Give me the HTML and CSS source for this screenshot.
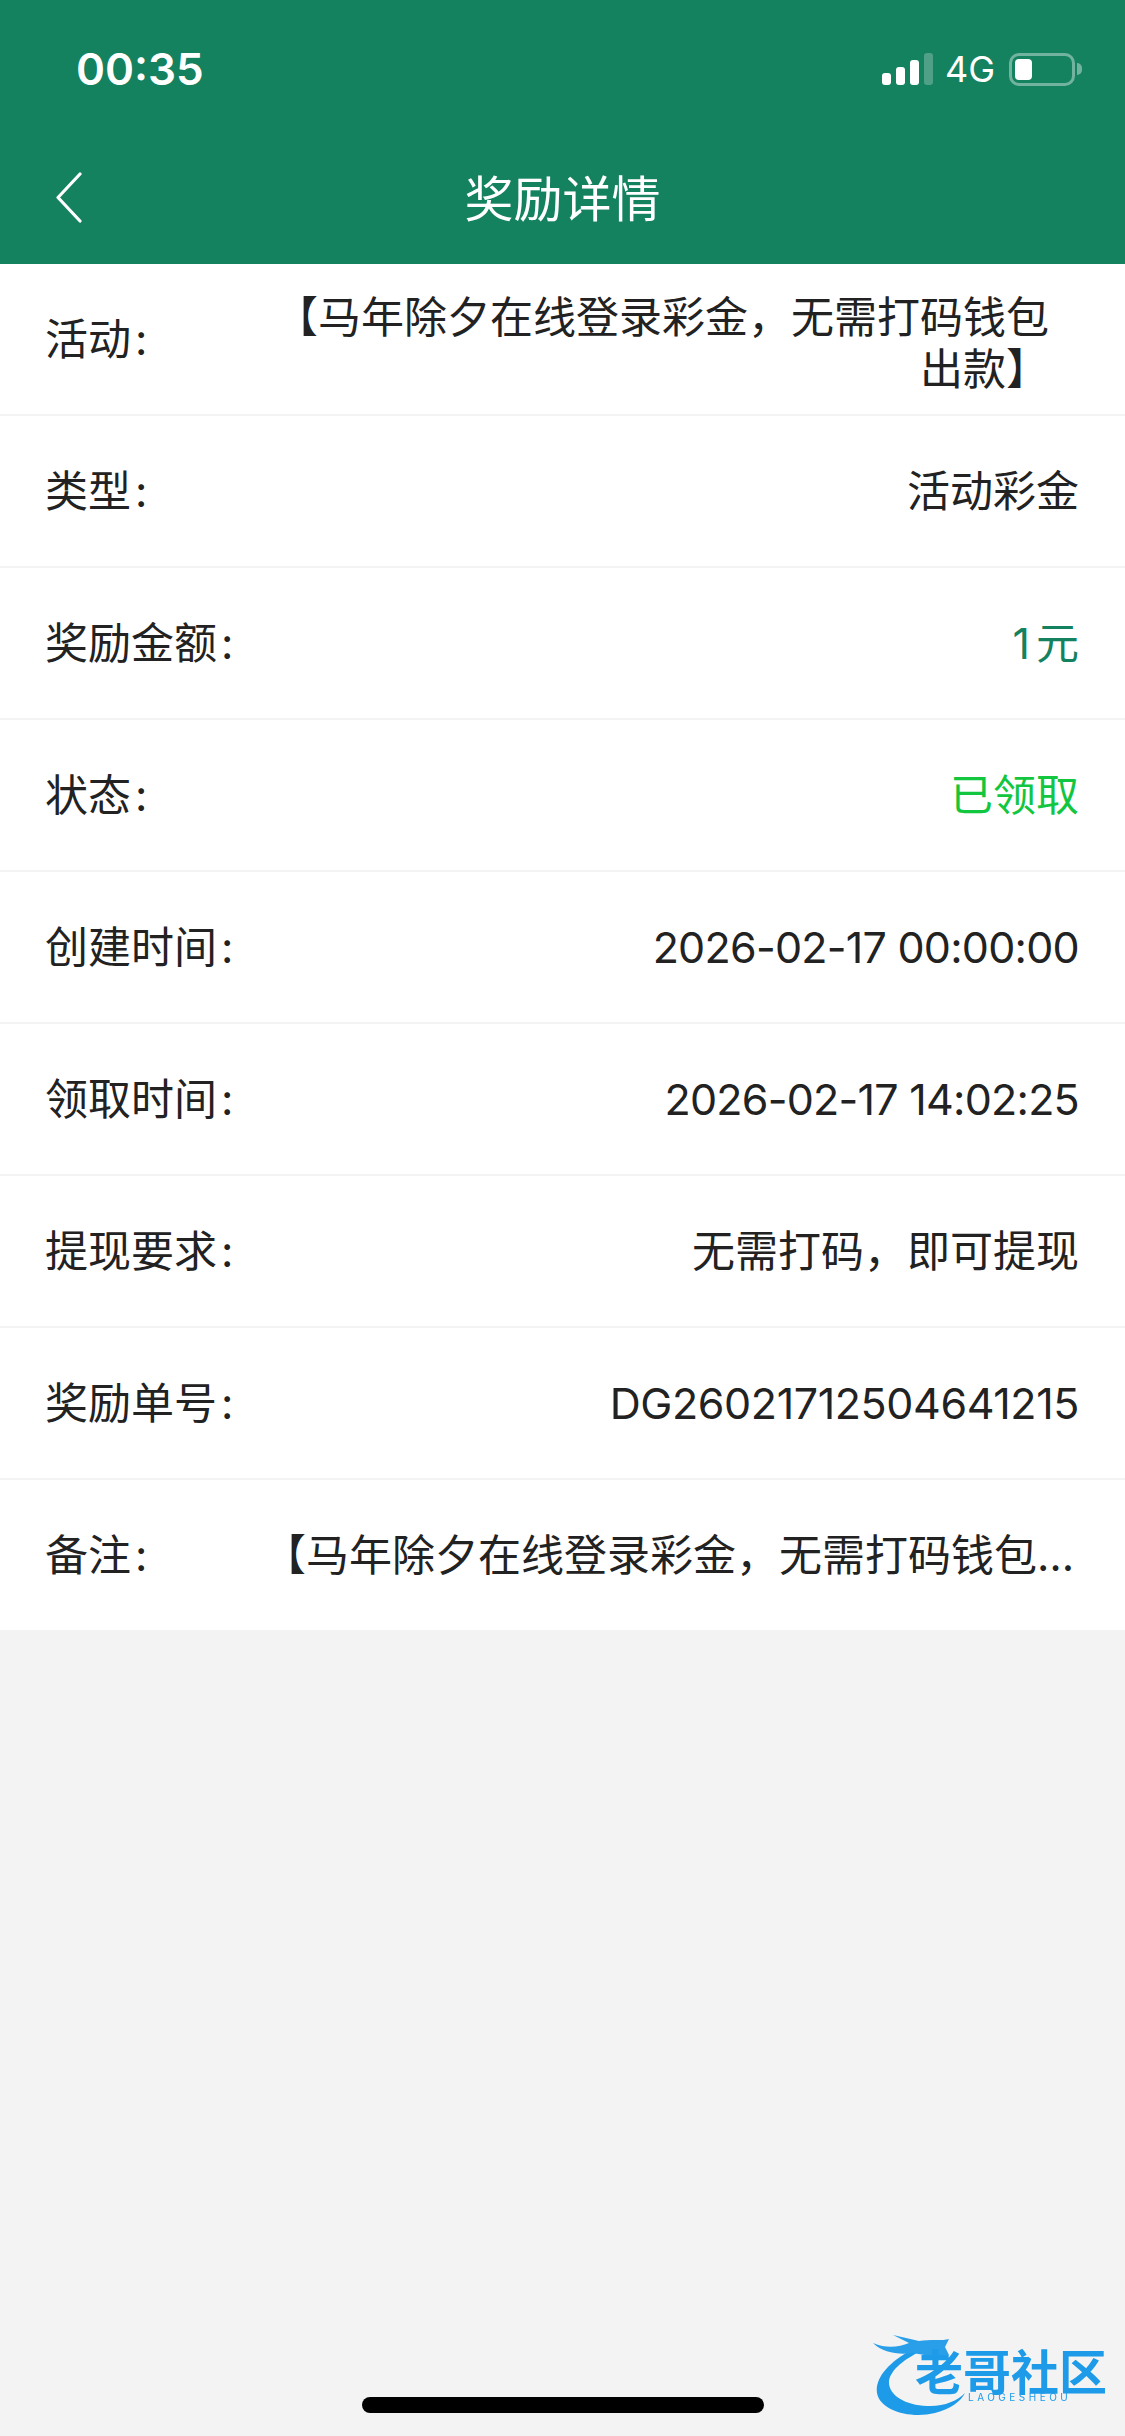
FILE: index.html
```html
<!DOCTYPE html>
<html lang="zh-CN">
<head>
  <meta charset="UTF-8" />
  <meta name="viewport" content="width=device-width, initial-scale=1.0"/>
  <title>奖励详情</title>
  <link rel="stylesheet" href="styles.css">
</head>
<body>
  <header class="header">
    <div class="status">
      <span class="time">00:35</span>
      <div class="status-right">
        <div class="signal">
          <i class="bar bar1"></i>
          <i class="bar bar2"></i>
          <i class="bar bar3"></i>
          <i class="bar bar4"></i>
        </div>
        <span class="net">4G</span>
        <div class="battery"><i class="battery-fill"></i></div>
        <i class="battery-nub"></i>
      </div>
    </div>
    <nav class="nav">
      <svg class="back" width="27" height="51" viewBox="0 0 27 51">
        <path d="M25 2 L3 25.500 L25 49" fill="none" stroke="#fff" stroke-width="3.200" stroke-linecap="round" stroke-linejoin="round"/>
      </svg>
      <h1 class="title">奖励详情</h1>
    </nav>
  </header>

  <section class="list">
    <div class="row">
      <span class="label">活动<b class="colon">:</b></span>
      <span class="value value-wrap">【马年除夕在线登录彩金，无需打码钱包出款】</span>
    </div>
    <div class="row">
      <span class="label">类型<b class="colon">:</b></span>
      <span class="value">活动彩金</span>
    </div>
    <div class="row">
      <span class="label">奖励金额<b class="colon">:</b></span>
      <span class="value amount"><span class="one">1</span>元</span>
    </div>
    <div class="row">
      <span class="label">状态<b class="colon">:</b></span>
      <span class="value done">已领取</span>
    </div>
    <div class="row">
      <span class="label">创建时间<b class="colon">:</b></span>
      <span class="value date">2026-02-17 00:00:00</span>
    </div>
    <div class="row">
      <span class="label">领取时间<b class="colon">:</b></span>
      <span class="value date">2026-02-17 14:02:25</span>
    </div>
    <div class="row">
      <span class="label">提现要求<b class="colon">:</b></span>
      <span class="value">无需打码，即可提现</span>
    </div>
    <div class="row">
      <span class="label">奖励单号<b class="colon">:</b></span>
      <span class="value order-no">DG26021712504641215</span>
    </div>
    <div class="row">
      <span class="label">备注<b class="colon">:</b></span>
      <span class="value value-cut">【马年除夕在线登录彩金，无需打码钱包出款】</span>
    </div>
  </section>

  <div class="watermark">
    <svg class="dragon" width="125" height="85" viewBox="0 0 125 85">
      <path d="M40 14 C14 28 2 44 4 58 C7 76 38 84 62 78 C78 74 88 66 92 58 C84 66 70 72 54 71 C32 70 15 60 16 46 C18 34 32 24 48 16 Z" fill="#1e9be8"/>
      <path d="M0 8 C14 14 26 12 36 8 L20 0 L46 6 C56 4 70 6 76 4 L72 12 L76 20 C62 22 50 20 40 18 C26 20 10 18 0 8 Z" fill="#2a9fe9"/>
    </svg>
    <span class="wm-name">老哥社区</span>
    <span class="wm-sub">LAOGESHEOU</span>
  </div>

  <div class="home-bar"></div>
</body>
</html>
```

FILE: styles.css
```css
body {
  margin: 0;
  width: 1125px;
  height: 2436px;
  position: relative;
  overflow: hidden;
  background: #f3f3f3;
  color: #222;
  font-family: Inter, "Noto Sans CJK SC", sans-serif;
}

.header {
  background: #14815f;
  color: #fff;
}
.status {
  height: 138px;
  margin-bottom: 2px;
  box-sizing: border-box;
  padding: 0 43px 0 76px;
  display: flex;
  align-items: center;
  justify-content: space-between;
}
.time {
  font-size: 44px;
  font-weight: 600;
}
.status-right {
  display: flex;
  align-items: center;
}
.signal {
  display: flex;
  align-items: flex-end;
  gap: 5px;
  height: 32px;
}
.bar {
  width: 9px;
  background: #fff;
  border-radius: 3px;
}
.bar1 { height: 12px; }
.bar2 { height: 18px; }
.bar3 { height: 25px; }
.bar4 { height: 32px; opacity: 0.25; }
.net {
  font-size: 36px;
  margin: 0 14px 0 12px;
  line-height: 32px;
}
.battery {
  width: 66px;
  height: 33px;
  box-sizing: border-box;
  border: 3px solid rgba(255,255,255,0.4);
  border-radius: 10px;
  padding: 3px;
  display: flex;
}
.battery-fill {
  width: 17px;
  background: #fff;
  border-radius: 4px;
}
.battery-nub {
  width: 5px;
  height: 12px;
  margin-left: 2px;
  background: rgba(255,255,255,0.4);
  border-radius: 0 6px 6px 0;
}

.nav {
  height: 124px;
  position: relative;
  display: flex;
  align-items: center;
  justify-content: center;
}
.back {
  position: absolute;
  left: 55px;
  top: 32px;
}
.title {
  margin: 0 0 14px;
  font-size: 49px;
  font-weight: 400;
}

.list {
  background: #fff;
}
.row {
  display: flex;
  align-items: center;
  height: 150px;
  padding: 0 46px 0 45px;
  border-bottom: 2px solid #f3f3f3;
  font-size: 43px;
  line-height: 51px;
}
.row:last-child {
  border-bottom: none;
}
.label {
  flex: none;
  width: 218px;
  white-space: nowrap;
}
.colon {
  font-weight: 400;
  margin-left: 4px;
}
.value {
  flex: 1;
  min-width: 0;
  text-align: right;
}
.value-wrap {
  padding: 8px 30px 0 0;
  line-height: 52px;
}
.value-cut {
  white-space: nowrap;
  overflow: hidden;
  text-overflow: ellipsis;
}
.date { letter-spacing: -0.75px; }
.order-no { letter-spacing: -0.4px; }
.amount { color: #14815f; }
.one { margin-right: 6px; }
.done { color: #12c63f; }

/* watermark sits on top of the empty page area */
.watermark {
  position: absolute;
  left: 873px;
  top: 2335px;
  width: 240px;
  height: 75px;
  filter: blur(0.7px);
}
.dragon {
  position: absolute;
  left: 0;
  top: 0;
}
.wm-name {
  position: absolute;
  left: 42px;
  top: 20px;
  font-size: 48px;
  line-height: 36px;
  font-weight: 700;
  white-space: nowrap;
  color: #1e9be8;
}
.wm-sub {
  position: absolute;
  left: 95px;
  top: 56px;
  font-size: 10px;
  line-height: 12px;
  letter-spacing: 3.500px;
  white-space: nowrap;
  color: #1e9be8;
}

.home-bar {
  position: absolute;
  left: 362px;
  top: 2397px;
  width: 402px;
  height: 16px;
  border-radius: 8px;
  background: #000;
}
```
